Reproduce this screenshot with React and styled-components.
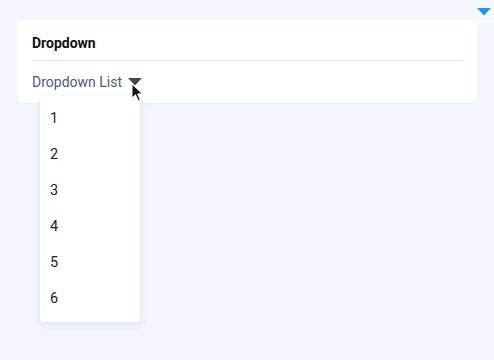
import React from 'react';
import styled, { createGlobalStyle } from 'styled-components';

const Global = createGlobalStyle`
  html, body {
    margin: 0;
    padding: 0;
    background: #f3f6fd;
    font-family: Roboto, 'Liberation Sans', sans-serif;
  }
`;

const Page = styled.div`
  position: relative;
  width: 494px;
  height: 360px;
  padding: 20px 17px 0;
  box-sizing: border-box;
  overflow: hidden;
`;

const Corner = styled.div`
  position: absolute;
  top: 0;
  right: 0;
  width: 21px;
  height: 23px;
  background: #f7f9fe;
  border-bottom-left-radius: 5px;
  display: flex;
  align-items: center;
  justify-content: center;
`;

const Card = styled.div`
  background: #fff;
  border-radius: 6px;
  padding: 0 15px;
  height: 83px;
  box-sizing: border-box;
  box-shadow: 0 1px 2px rgba(40, 60, 120, 0.04);
`;

const Title = styled.div`
  font-size: 14px;
  font-weight: 700;
  color: #111;
  height: 40px;
  line-height: 46px;
  border-bottom: 1px solid #e2e4ea;
`;

const Toggle = styled.div`
  position: relative;
  display: inline-flex;
  align-items: center;
  gap: 6px;
  margin-top: 11px;
  font-size: 14px;
  color: #4b5c78;
  line-height: 20px;
`;

const Menu = styled.ul`
  position: absolute;
  top: 24px;
  left: 8px;
  width: 100px;
  margin: 0;
  padding: 5px 0;
  list-style: none;
  background: #fff;
  border-radius: 4px;
  box-shadow: 0 2px 8px rgba(60, 80, 140, 0.12);
  z-index: 2;
`;

const Item = styled.li`
  height: 36px;
  line-height: 36px;
  padding-left: 10px;
  font-size: 14.5px;
  color: #222;
`;

const Cursor = styled.svg`
  position: absolute;
  left: 99px;
  top: 11px;
  z-index: 3;
`;

export default function App() {
  return (
    <>
      <Global />
      <Page>
        <Corner>
          <svg width="14" height="8" viewBox="0 0 14 8">
            <path d="M0 0h14L7 7.5z" fill="#2196f3" />
          </svg>
        </Corner>
        <Card>
          <Title>Dropdown</Title>
          <Toggle>
            Dropdown List
            <svg width="14" height="8" viewBox="0 0 14 8">
              <path d="M0 0h14L7 7.5z" fill="#3d4a5c" />
            </svg>
            <Cursor width="12" height="19" viewBox="0 0 12 19">
              <path d="M1 1v14l3.5-3.3 2.6 6 2.2-1-2.6-5.8H11.5z" fill="#111" stroke="#fff" strokeWidth="1" />
            </Cursor>
            <Menu>
              {[1, 2, 3, 4, 5, 6].map((n) => (
                <Item key={n}>{n}</Item>
              ))}
            </Menu>
          </Toggle>
        </Card>
      </Page>
    </>
  );
}
